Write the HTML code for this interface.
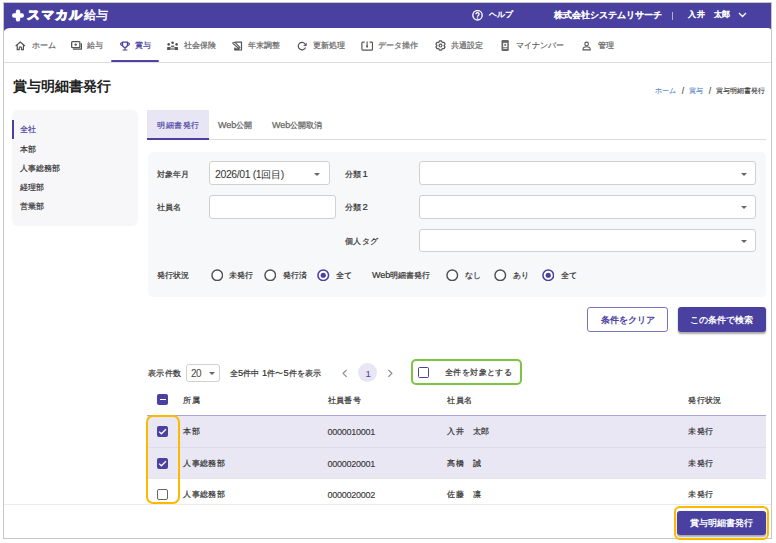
<!DOCTYPE html>
<html lang="ja">
<head>
<meta charset="utf-8">
<style>
*{box-sizing:border-box;margin:0;padding:0}
html,body{width:776px;height:543px;overflow:hidden;background:#fff}
body{position:relative;font-family:"Liberation Sans",sans-serif;color:#333}
.a{position:absolute}
.t{position:absolute;white-space:nowrap;line-height:1;-webkit-text-stroke:0.2px currentColor}
.b0{-webkit-text-stroke:0}
.m{-webkit-text-stroke:0.35px currentColor}
#frame{left:3px;top:2px;width:769px;height:537px;border:1px solid #c6c6c6;background:#fff;overflow:hidden}
#hdr{left:4px;top:3px;width:767px;height:30px;background:#4940a0}
#main{left:4px;top:28px;width:767px;height:510px;background:#fff;border-radius:7px 3px 0 0/3.5px 2px 0 0}
.w{color:#fff}
.nav{font-size:8px;color:#666}
.ico{position:absolute}
.lbl{font-size:8px;color:#333;-webkit-text-stroke:0.2px #333}
.box{position:absolute;background:#fff;border:1px solid #d0d0d0;border-radius:3px}
.caret{position:absolute;width:0;height:0;border-left:3px solid transparent;border-right:3px solid transparent;border-top:3px solid #666}
.radio{position:absolute;width:12px;height:12px;border:1.8px solid #444;border-radius:50%;background:#fff}
.radio.on{border-color:#4940a0}
.radio.on::after{content:"";position:absolute;left:1.3px;top:1.3px;width:5.8px;height:5.8px;border-radius:50%;background:#4940a0}
.rt{font-size:8px;color:#333;-webkit-text-stroke:0.2px #333}
.cell{font-size:8px;letter-spacing:0.4px;color:#333}
.cb{position:absolute;width:11px;height:11px;border-radius:2px;background:#4940a0}
</style>
</head>
<body>
<div id="frame" class="a"></div>
<div id="hdr" class="a"></div>
<div id="main" class="a"></div>

<!-- header -->
<svg class="a" style="left:11px;top:9px" width="14" height="13" viewBox="0 0 14 13"><path d="M7 2.6V10.4M3.2 6.5H10.8" stroke="#fff" stroke-width="4.4" stroke-linecap="round"/></svg>
<div class="t w" style="left:27px;top:8.8px;font-size:12.6px;font-weight:bold;letter-spacing:1.1px;-webkit-text-stroke:1px #fff;transform:skewX(-5deg)">スマカル</div>
<div class="t w" style="left:83.5px;top:9.5px;font-size:11.5px;-webkit-text-stroke:0.45px #fff">給与</div>

<svg class="a" style="left:472px;top:9.6px" width="11" height="11" viewBox="0 0 11 11"><circle cx="5.5" cy="5.3" r="4.7" fill="none" stroke="#fff" stroke-width="1.35"/><path d="M3.95 4.15a1.55 1.55 0 1 1 2.4 1.3c-.55.35-.85.65-.85 1.3" fill="none" stroke="#fff" stroke-width="1.35"/><circle cx="5.5" cy="8" r=".8" fill="#fff"/></svg>
<div class="t w" style="left:489px;top:10.8px;font-size:8px;-webkit-text-stroke:0.35px #fff">ヘルプ</div>
<div class="t w" style="left:554px;top:10.5px;font-size:9px;-webkit-text-stroke:0.55px #fff">株式会社システムリサーチ</div>
<div class="a" style="left:672px;top:11.5px;width:1px;height:8px;background:#b4afe0"></div>
<div class="t w" style="left:688px;top:10.5px;font-size:8px;letter-spacing:0.5px;-webkit-text-stroke:0.5px #fff">入井　太郎</div>
<svg class="a" style="left:738px;top:12px" width="9" height="6" viewBox="0 0 9 6"><path d="M1 1L4.5 4.5L8 1" fill="none" stroke="#fff" stroke-width="1.3"/></svg>

<!-- nav -->
<svg class="ico" style="left:15px;top:40.5px" width="11" height="10" viewBox="0 0 11 10"><path d="M0.7 5L5.3 1L9.9 5" fill="none" stroke="#555" stroke-width="1.2" stroke-linejoin="round"/><path d="M2.2 3.9V8.6H4.2V7A1.15 1.15 0 0 1 6.5 7V8.6H8.4V3.9" fill="none" stroke="#555" stroke-width="1.2"/></svg>
<div class="t nav" style="left:31.5px;top:41.5px">ホーム</div>
<svg class="ico" style="left:71px;top:41px" width="11" height="9" viewBox="0 0 11 9"><rect x="0.65" y="0.65" width="8.2" height="5.9" rx="0.9" fill="none" stroke="#555" stroke-width="1.3"/><circle cx="4.75" cy="3.6" r="1.2" fill="#555"/><path d="M2 8.2H10.4V2.2" fill="none" stroke="#555" stroke-width="1.2"/></svg>
<div class="t nav" style="left:87px;top:41.5px">給与</div>
<svg class="ico" style="left:119.5px;top:40.5px" width="10" height="10" viewBox="0 0 10 10"><path d="M2.6 1.2H7.4V4A2.4 2.4 0 0 1 2.6 4Z" fill="none" stroke="#4940a0" stroke-width="1.2"/><path d="M2.6 1.9H1.8A1.15 1.15 0 0 0 1.8 4.3H2.7M7.4 1.9H8.2A1.15 1.15 0 0 1 8.2 4.3H7.3M5 6.4V8.7M2.6 9H7.4" fill="none" stroke="#4940a0" stroke-width="1.2"/></svg>
<div class="t nav" style="left:135px;top:41.5px;color:#4940a0">賞与</div>
<div class="a" style="left:111.3px;top:60.3px;width:47.7px;height:1.7px;background:#4d44a6;border-radius:1px"></div>
<svg class="ico" style="left:167px;top:41px" width="11" height="9" viewBox="0 0 11 9"><circle cx="5.6" cy="1.75" r="1.35" fill="#555"/><circle cx="1.7" cy="3.4" r="1.3" fill="#555"/><circle cx="9.6" cy="3.4" r="1.3" fill="#555"/><rect x="3.9" y="4.4" width="3.5" height="1.5" rx="0.7" fill="#666"/><rect x="0.1" y="6.1" width="3.6" height="2.8" rx="0.5" fill="#555"/><rect x="7.4" y="6.1" width="3.6" height="2.8" rx="0.5" fill="#555"/><rect x="3.6" y="6.6" width="3.9" height="2.3" fill="#999"/></svg>
<div class="t nav" style="left:183.5px;top:41.5px">社会保険</div>
<svg class="ico" style="left:232px;top:40.5px" width="11" height="10" viewBox="0 0 11 10"><path d="M3.2 1.1H9.5V9H2.9V6.6" fill="none" stroke="#555" stroke-width="1.2"/><path d="M0.7 2.1L3 1.3L8 6.6L6.7 7.5Z" fill="none" stroke="#555" stroke-width="1.05" stroke-linejoin="round"/><rect x="2.4" y="7.3" width="5" height="1.8" fill="#555"/></svg>
<div class="t nav" style="left:247.5px;top:41.5px">年末調整</div>
<svg class="ico" style="left:297px;top:40.5px" width="10" height="10" viewBox="0 0 10 10"><path d="M8.50 6.44A3.75 3.75 0 1 1 7.96 2.79" fill="none" stroke="#555" stroke-width="1.2"/><path d="M9.6 1.4V4.9H6.1Z" fill="#555"/></svg>
<div class="t nav" style="left:312.5px;top:41.5px">更新処理</div>
<svg class="ico" style="left:361px;top:40.5px" width="12" height="10" viewBox="0 0 12 10"><path d="M3.6 1.1H1.8A1 1 0 0 0 0.9 2.1V8.2A1 1 0 0 0 1.9 9.1H10.6A1 1 0 0 0 11.5 8.2V2.1A1 1 0 0 0 10.6 1.1H8.6" fill="none" stroke="#555" stroke-width="1.2"/><path d="M6.1 0.6V5.2" stroke="#555" stroke-width="1.1"/><circle cx="6.1" cy="5.6" r="1.05" fill="#555"/></svg>
<div class="t nav" style="left:378px;top:41.5px">データ操作</div>
<svg class="ico" style="left:435px;top:40.3px" width="11" height="11" viewBox="0 0 11 11"><path d="M4.43 0.87 L6.57 0.87 L6.97 2.05 L7.76 2.51 L8.97 2.26 L10.04 4.11 L9.22 5.04 L9.22 5.96 L10.04 6.89 L8.97 8.74 L7.76 8.49 L6.97 8.95 L6.57 10.13 L4.43 10.13 L4.03 8.95 L3.24 8.49 L2.03 8.74 L0.96 6.89 L1.78 5.96 L1.78 5.04 L0.96 4.11 L2.03 2.26 L3.24 2.51 L4.03 2.05Z" fill="none" stroke="#555" stroke-width="1.25" stroke-linejoin="round"/><circle cx="5.5" cy="5.5" r="1.45" fill="none" stroke="#555" stroke-width="1.15"/></svg>
<div class="t nav" style="left:450.5px;top:41.5px">共通設定</div>
<svg class="ico" style="left:501px;top:40px" width="8" height="11" viewBox="0 0 8 11"><rect x="0.5" y="0.1" width="7.3" height="10.9" rx="1.2" fill="#666"/><rect x="2.2" y="2.9" width="4.1" height="4.2" fill="#fff"/><circle cx="4.25" cy="4.9" r="1.1" fill="#777"/><rect x="2.2" y="7.8" width="4.1" height="0.9" fill="#fff"/></svg>
<div class="t nav" style="left:516px;top:41.5px">マイナンバー</div>
<svg class="ico" style="left:581.5px;top:40.5px" width="9" height="10" viewBox="0 0 9 10"><circle cx="4.6" cy="2.9" r="1.8" fill="none" stroke="#555" stroke-width="1.1"/><path d="M1 8.9V8.2C1 6.6 3 5.7 4.6 5.7C6.2 5.7 8.2 6.6 8.2 8.2V8.9Z" fill="none" stroke="#555" stroke-width="1.1"/></svg>
<div class="t nav" style="left:597.5px;top:41.5px">管理</div>
<div class="a" style="left:4px;top:62px;width:767px;height:1px;background:#dedede"></div>

<!-- title / breadcrumb -->
<div class="t b0" style="left:12.5px;top:78.5px;font-size:14px;font-weight:bold;color:#222">賞与明細書発行</div>
<div class="t" style="left:655px;top:87px;font-size:7px;color:#5482cc;-webkit-text-stroke:0.1px #5482cc">ホーム</div>
<div class="t" style="left:681.8px;top:86.5px;font-size:8.5px;color:#555">/</div>
<div class="t" style="left:688.5px;top:87px;font-size:7px;color:#5482cc;-webkit-text-stroke:0.1px #5482cc">賞与</div>
<div class="t" style="left:708.8px;top:86.5px;font-size:8.5px;color:#555">/</div>
<div class="t" style="left:715.5px;top:87px;font-size:7px;color:#333;-webkit-text-stroke:0.1px #333">賞与明細書発行</div>

<!-- sidebar -->
<div class="a" style="left:12px;top:110px;width:126px;height:115.8px;background:#f7f7fa;border-radius:6px"></div>
<div class="a" style="left:12px;top:120px;width:1.6px;height:19.3px;background:#4940a0"></div>
<div class="t" style="left:20px;top:126.3px;font-size:7.75px;color:#4940a0">全社</div>
<div class="t" style="left:20px;top:145.5px;font-size:7.75px;color:#333">本部</div>
<div class="t" style="left:20px;top:165px;font-size:7.75px;color:#333">人事総務部</div>
<div class="t" style="left:20px;top:183.8px;font-size:7.75px;color:#333">経理部</div>
<div class="t" style="left:20px;top:203px;font-size:7.75px;color:#333">営業部</div>

<!-- tabs -->
<div class="a" style="left:147px;top:110px;width:61.6px;height:29px;background:#e8e6f4"></div>
<div class="a" style="left:147px;top:139px;width:619px;height:1px;background:#dcdcdc"></div>
<div class="a" style="left:147px;top:138px;width:61.6px;height:1.7px;background:#4940a0"></div>
<div class="t" style="left:157px;top:121px;font-size:8.3px;letter-spacing:0.5px;color:#4940a0;-webkit-text-stroke:0.15px #4940a0">明細書発行</div>
<div class="t" style="left:218px;top:121px;font-size:8.3px;color:#666;-webkit-text-stroke:0.25px #666"><span style="font-size:9px;line-height:0">Web</span>公開</div>
<div class="t" style="left:272px;top:121px;font-size:8.3px;color:#666;-webkit-text-stroke:0.25px #666"><span style="font-size:9px;line-height:0">Web</span>公開取消</div>

<!-- search panel -->
<div class="a" style="left:147.6px;top:152px;width:618.1px;height:145px;background:#f7f8fa;border-radius:5px"></div>
<div class="t lbl" style="left:157px;top:171px">対象年月</div>
<div class="t lbl" style="left:157px;top:204px">社員名</div>
<div class="t lbl" style="left:345px;top:171px">分類<span style="font-size:9.5px;line-height:0;margin-left:1.5px">1</span></div>
<div class="t lbl" style="left:345px;top:204px">分類<span style="font-size:9.5px;line-height:0;margin-left:1.5px">2</span></div>
<div class="t lbl" style="left:345px;top:237.5px;letter-spacing:0.4px">個人タグ</div>
<div class="box" style="left:209px;top:161.3px;width:120.5px;height:24.1px"></div>
<div class="t b0" style="left:215px;top:168.5px;font-size:10.5px;letter-spacing:-0.4px;color:#333">2026/01 (1<span style="font-size:10px;letter-spacing:-0.2px;line-height:0">回目</span>)</div>
<div class="caret" style="left:314px;top:172.5px"></div>
<div class="box" style="left:209px;top:195px;width:126.8px;height:24px"></div>
<div class="box" style="left:418.5px;top:161.3px;width:337.1px;height:24.1px"></div>
<div class="caret" style="left:741px;top:172.5px"></div>
<div class="box" style="left:418.5px;top:195px;width:337.1px;height:24px"></div>
<div class="caret" style="left:741px;top:206px"></div>
<div class="box" style="left:418.5px;top:229px;width:337.1px;height:23.3px"></div>
<div class="caret" style="left:741px;top:239.5px"></div>

<div class="t lbl" style="left:157.4px;top:272px">発行状況</div>
<svg class="a" style="left:210.6px;top:268.8px" width="12.5" height="12.5" viewBox="0 0 12.5 12.5"><circle cx="6.25" cy="6.25" r="5.3" fill="#fff" stroke="#505050" stroke-width="1.45"/></svg>
<div class="t rt" style="left:229.3px;top:272px">未発行</div>
<svg class="a" style="left:263.8px;top:268.8px" width="12.5" height="12.5" viewBox="0 0 12.5 12.5"><circle cx="6.25" cy="6.25" r="5.3" fill="#fff" stroke="#505050" stroke-width="1.45"/></svg>
<div class="t rt" style="left:282.8px;top:272px">発行済</div>
<svg class="a" style="left:317.3px;top:268.8px" width="12.5" height="12.5" viewBox="0 0 12.5 12.5"><circle cx="6.25" cy="6.25" r="5.3" fill="#fff" stroke="#4940a0" stroke-width="1.55"/><circle cx="6.25" cy="6.25" r="2.6" fill="#4940a0"/></svg>
<div class="t rt" style="left:335.7px;top:272px">全て</div>
<div class="t lbl" style="left:372px;top:272px"><span style="font-size:9px;line-height:0">Web</span>明細書発行</div>
<svg class="a" style="left:446.1px;top:268.8px" width="12.5" height="12.5" viewBox="0 0 12.5 12.5"><circle cx="6.25" cy="6.25" r="5.3" fill="#fff" stroke="#505050" stroke-width="1.45"/></svg>
<div class="t rt" style="left:464.8px;top:272px">なし</div>
<svg class="a" style="left:494.3px;top:268.8px" width="12.5" height="12.5" viewBox="0 0 12.5 12.5"><circle cx="6.25" cy="6.25" r="5.3" fill="#fff" stroke="#505050" stroke-width="1.45"/></svg>
<div class="t rt" style="left:513px;top:272px">あり</div>
<svg class="a" style="left:541.7px;top:268.8px" width="12.5" height="12.5" viewBox="0 0 12.5 12.5"><circle cx="6.25" cy="6.25" r="5.3" fill="#fff" stroke="#4940a0" stroke-width="1.55"/><circle cx="6.25" cy="6.25" r="2.6" fill="#4940a0"/></svg>
<div class="t rt" style="left:560.6px;top:272px">全て</div>

<!-- buttons -->
<div class="a" style="left:587px;top:306.7px;width:81px;height:25px;border:1px solid #7b74c2;border-radius:3px;background:#fff"></div>
<div class="t b0" style="left:601px;top:315.5px;font-size:9px;font-weight:bold;color:#4940a0">条件をクリア</div>
<div class="a" style="left:677.5px;top:306.8px;width:88px;height:25px;border-radius:3px;background:#4940a0;box-shadow:0 1.5px 2px rgba(0,0,0,.35)"></div>
<div class="t w b0" style="left:690px;top:315.5px;font-size:9px;font-weight:bold">この条件で検索</div>

<!-- toolbar -->
<div class="t cell" style="left:148px;top:370px">表示件数</div>
<div class="box" style="left:186px;top:364.3px;width:33.6px;height:17.3px"></div>
<div class="t b0" style="left:191px;top:368.5px;font-size:10px;letter-spacing:-0.5px;color:#444">20</div>
<div class="caret" style="left:208.5px;top:371.5px"></div>
<div class="t cell" style="left:230px;top:369.3px;font-size:8.3px;letter-spacing:0.1px">全<span style="font-size:9.3px;line-height:0">5</span>件中 <span style="font-size:9.3px;line-height:0">1</span>件〜<span style="font-size:9.3px;line-height:0">5</span>件を表示</div>
<svg class="a" style="left:341px;top:368.5px" width="7" height="9" viewBox="0 0 7 9"><path d="M5.6 0.8L2.1 4.3L5.6 7.8" fill="none" stroke="#888" stroke-width="1.15"/></svg>
<div class="a" style="left:358px;top:363.1px;width:19px;height:19px;border-radius:50%;background:#e8e6f4"></div>
<div class="t b0" style="left:365.5px;top:368.6px;font-size:9.6px;color:#4940a0">1</div>
<svg class="a" style="left:387px;top:368.5px" width="7" height="9" viewBox="0 0 7 9"><path d="M1.4 0.8L4.9 4.3L1.4 7.8" fill="none" stroke="#888" stroke-width="1.15"/></svg>
<div class="a" style="left:411.2px;top:359px;width:110.6px;height:26.2px;border:2px solid #7fc440;border-radius:5px"></div>
<div class="a" style="left:418px;top:367.1px;width:11px;height:11px;border:1.5px solid #4940a0;border-radius:1.5px"></div>
<div class="t cell" style="left:445px;top:368.8px;font-size:8px;letter-spacing:0.4px">全件を対象とする</div>

<!-- table -->
<div class="cb" style="left:157px;top:394px"></div>
<div class="a" style="left:159.5px;top:398.8px;width:6px;height:1.4px;background:#fff"></div>
<div class="t cell" style="left:183.3px;top:396.5px">所属</div>
<div class="t cell" style="left:327.5px;top:396.5px">社員番号</div>
<div class="t cell" style="left:447.4px;top:396.5px">社員名</div>
<div class="t cell" style="left:688.3px;top:396.5px">発行状況</div>
<div class="a" style="left:147.4px;top:415px;width:618.3px;height:32px;background:#e9e7f4"></div>
<div class="a" style="left:147.4px;top:447px;width:618.3px;height:31px;background:#e9e7f4"></div>
<div class="a" style="left:147.4px;top:415px;width:618.3px;height:1px;background:#aaa5d8"></div>
<div class="a" style="left:147.4px;top:447px;width:618.3px;height:1px;background:#dedcea"></div>
<div class="a" style="left:147.4px;top:478px;width:618.3px;height:1px;background:#e6e6ea"></div>

<div class="cb" style="left:157px;top:426px"></div>
<svg class="a" style="left:157px;top:426px" width="11" height="11" viewBox="0 0 11 11"><path d="M2.1 5.6L4.4 7.8L8.9 3.2" fill="none" stroke="#fff" stroke-width="1.25"/></svg>
<div class="t cell" style="left:183.3px;top:427.5px">本部</div>
<div class="t cell" style="left:327.5px;top:427.5px;font-size:9px;letter-spacing:-0.25px;-webkit-text-stroke:0.1px #333">0000010001</div>
<div class="t cell" style="left:447.4px;top:427.5px">入井　太郎</div>
<div class="t cell" style="left:688.3px;top:427.5px">未発行</div>

<div class="cb" style="left:157px;top:457.5px"></div>
<svg class="a" style="left:157px;top:457.5px" width="11" height="11" viewBox="0 0 11 11"><path d="M2.1 5.6L4.4 7.8L8.9 3.2" fill="none" stroke="#fff" stroke-width="1.25"/></svg>
<div class="t cell" style="left:183.3px;top:460px">人事総務部</div>
<div class="t cell" style="left:327.5px;top:460px;font-size:9px;letter-spacing:-0.25px;-webkit-text-stroke:0.1px #333">0000020001</div>
<div class="t cell" style="left:447.4px;top:460px">髙橋　誠</div>
<div class="t cell" style="left:688.3px;top:460px">未発行</div>

<div class="a" style="left:157px;top:489px;width:11px;height:11px;border:1.5px solid #666;border-radius:2px;background:#fff"></div>
<div class="t cell" style="left:183.3px;top:491px">人事総務部</div>
<div class="t cell" style="left:327.5px;top:491px;font-size:9px;letter-spacing:-0.25px;-webkit-text-stroke:0.1px #333">0000020002</div>
<div class="t cell" style="left:447.4px;top:491px">佐藤　凛</div>
<div class="t cell" style="left:688.3px;top:491px">未発行</div>

<div class="a" style="left:145.8px;top:414.8px;width:34px;height:88.8px;border:2.3px solid #fbb900;border-radius:7px"></div>

<!-- footer -->
<div class="a" style="left:4px;top:504px;width:767px;height:1px;background:#ebebeb"></div>
<div class="a" style="left:677.2px;top:510.7px;width:89px;height:24.3px;border-radius:3px;background:#4940a0;box-shadow:0 1.5px 2px rgba(0,0,0,.35)"></div>
<div class="t w b0" style="left:690.3px;top:519px;font-size:9px;font-weight:bold">賞与明細書発行</div>
<div class="a" style="left:674.2px;top:506.2px;width:94.6px;height:33.8px;border:2.2px solid #fbb900;border-radius:6px"></div>
</body>
</html>
